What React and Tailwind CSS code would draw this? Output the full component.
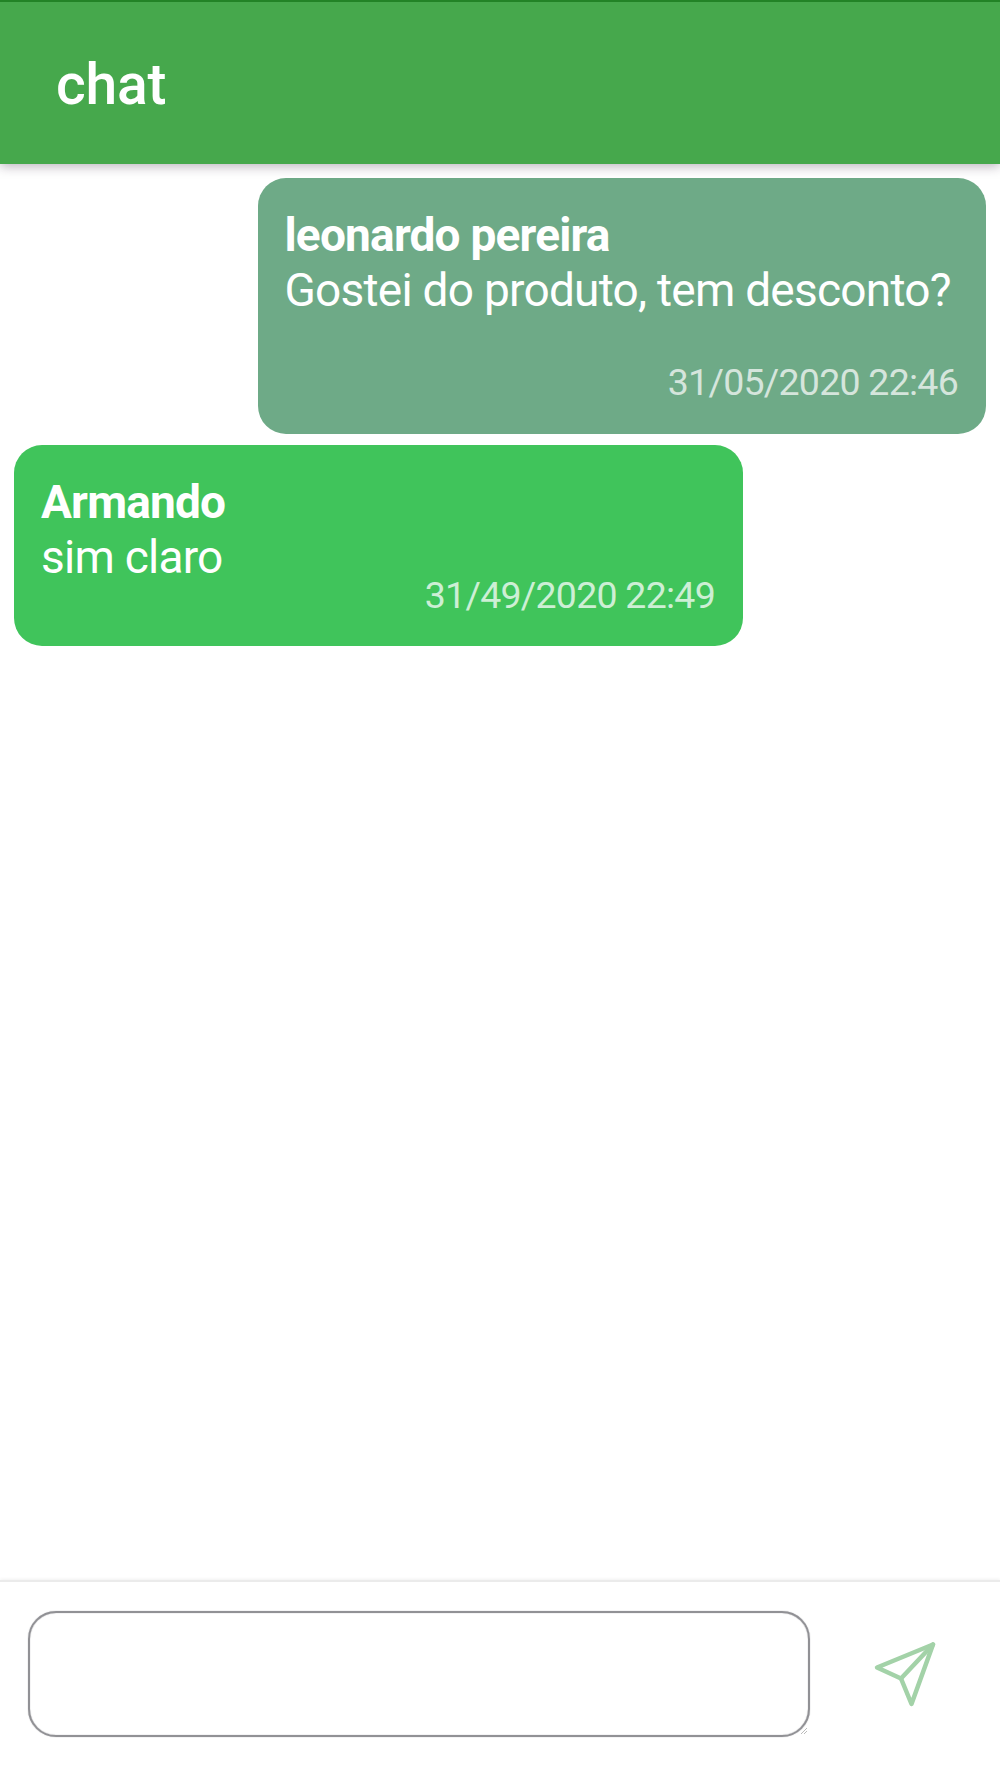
import React, { useState } from 'react'

const messages = [
  {
    id: 1,
    author: 'leonardo pereira',
    text: 'Gostei do produto, tem desconto?',
    date: '31/05/2020 22:46',
    mine: true
  },
  {
    id: 2,
    author: 'Armando',
    text: 'sim claro',
    date: '31/49/2020 22:49',
    mine: false
  }
]

const Header = () => (
  <header className="z-10 h-[164px] shrink-0 border-t-2 border-[#228326] bg-[#46a84c] pl-14 pt-12 shadow-[0_2px_11px_rgba(40,20,50,0.34)]">
    <h1 className="text-[57px] font-medium leading-[70px] tracking-[-0.2px] text-white">chat</h1>
  </header>
)

const Message = ({ message }) => (
  <div
    className={
      message.mine
        ? 'flex h-[255.5px] w-[728.5px] flex-col self-end rounded-[28px] bg-[#6eaa87] px-7 pt-[30px] text-white'
        : 'flex h-[201px] w-[729px] flex-col self-start rounded-[28px] bg-[#40c45b] px-7 pt-[30px] text-white'
    }
  >
    <strong className="-ml-px text-[46px] font-bold leading-[55px] tracking-[-0.8px]">{message.author}</strong>
    <p className="-ml-px whitespace-nowrap text-[46px] leading-[55px] tracking-[-0.75px]">{message.text}</p>
    <time
      className={
        message.mine
          ? 'mt-[42px] self-end text-[37.5px] leading-[44px] tracking-[-0.75px] text-[#d5e5dc]'
          : '-mt-[12px] self-end text-[37.5px] leading-[44px] tracking-[-0.75px] text-[#cdefd5]'
      }
    >
      {message.date}
    </time>
  </div>
)

const SendIcon = () => (
  <svg
    className="h-[70px] w-[70px]"
    viewBox="0 0 70 70"
    fill="none"
    stroke="#a3d2a8"
    strokeWidth="4.5"
    strokeLinejoin="round"
    strokeLinecap="round"
  >
    <path d="M63 4.5 L7 27.5 L31 38.5 L41.5 64 Z" />
    <path d="M63 4.5 L31 38.5" />
  </svg>
)

const Footer = () => {
  const [text, setText] = useState('')

  return (
    <footer className="flex h-[198px] shrink-0 items-start border-t-2 border-[#ebebeb] bg-white pl-7 pt-[29px] shadow-[0_-1px_3px_rgba(0,0,0,0.06)]">
      <div className="relative h-[126px] w-[782px]">
        <textarea
          value={text}
          onChange={(e) => setText(e.target.value)}
          className="block h-full w-full resize-none rounded-[28px] border-[2px] border-[#919195] px-6 py-7 text-[46px] leading-[55px] shadow-[0_0_1px_#919195,inset_0_0_1px_#919195] outline-none"
        />
        {/* resize grip */}
        <svg className="absolute bottom-[3px] right-[3px] h-[6px] w-[6px]" viewBox="0 0 6 6" stroke="#bbb">
          <path d="M0 6 L6 0 M3 6 L6 3" />
        </svg>
      </div>
      <button className="ml-[60px] mt-[29px]" aria-label="Enviar">
        <SendIcon />
      </button>
    </footer>
  )
}

const App = () => {
  return (
    <div className="flex h-[1778px] w-full flex-col overflow-hidden bg-white font-['Roboto',sans-serif]">
      <Header />
      <main className="flex flex-1 flex-col gap-[11.5px] px-3.5 pt-3.5">
        {messages.map((message) => (
          <Message key={message.id} message={message} />
        ))}
      </main>
      <Footer />
    </div>
  )
}

export default App
